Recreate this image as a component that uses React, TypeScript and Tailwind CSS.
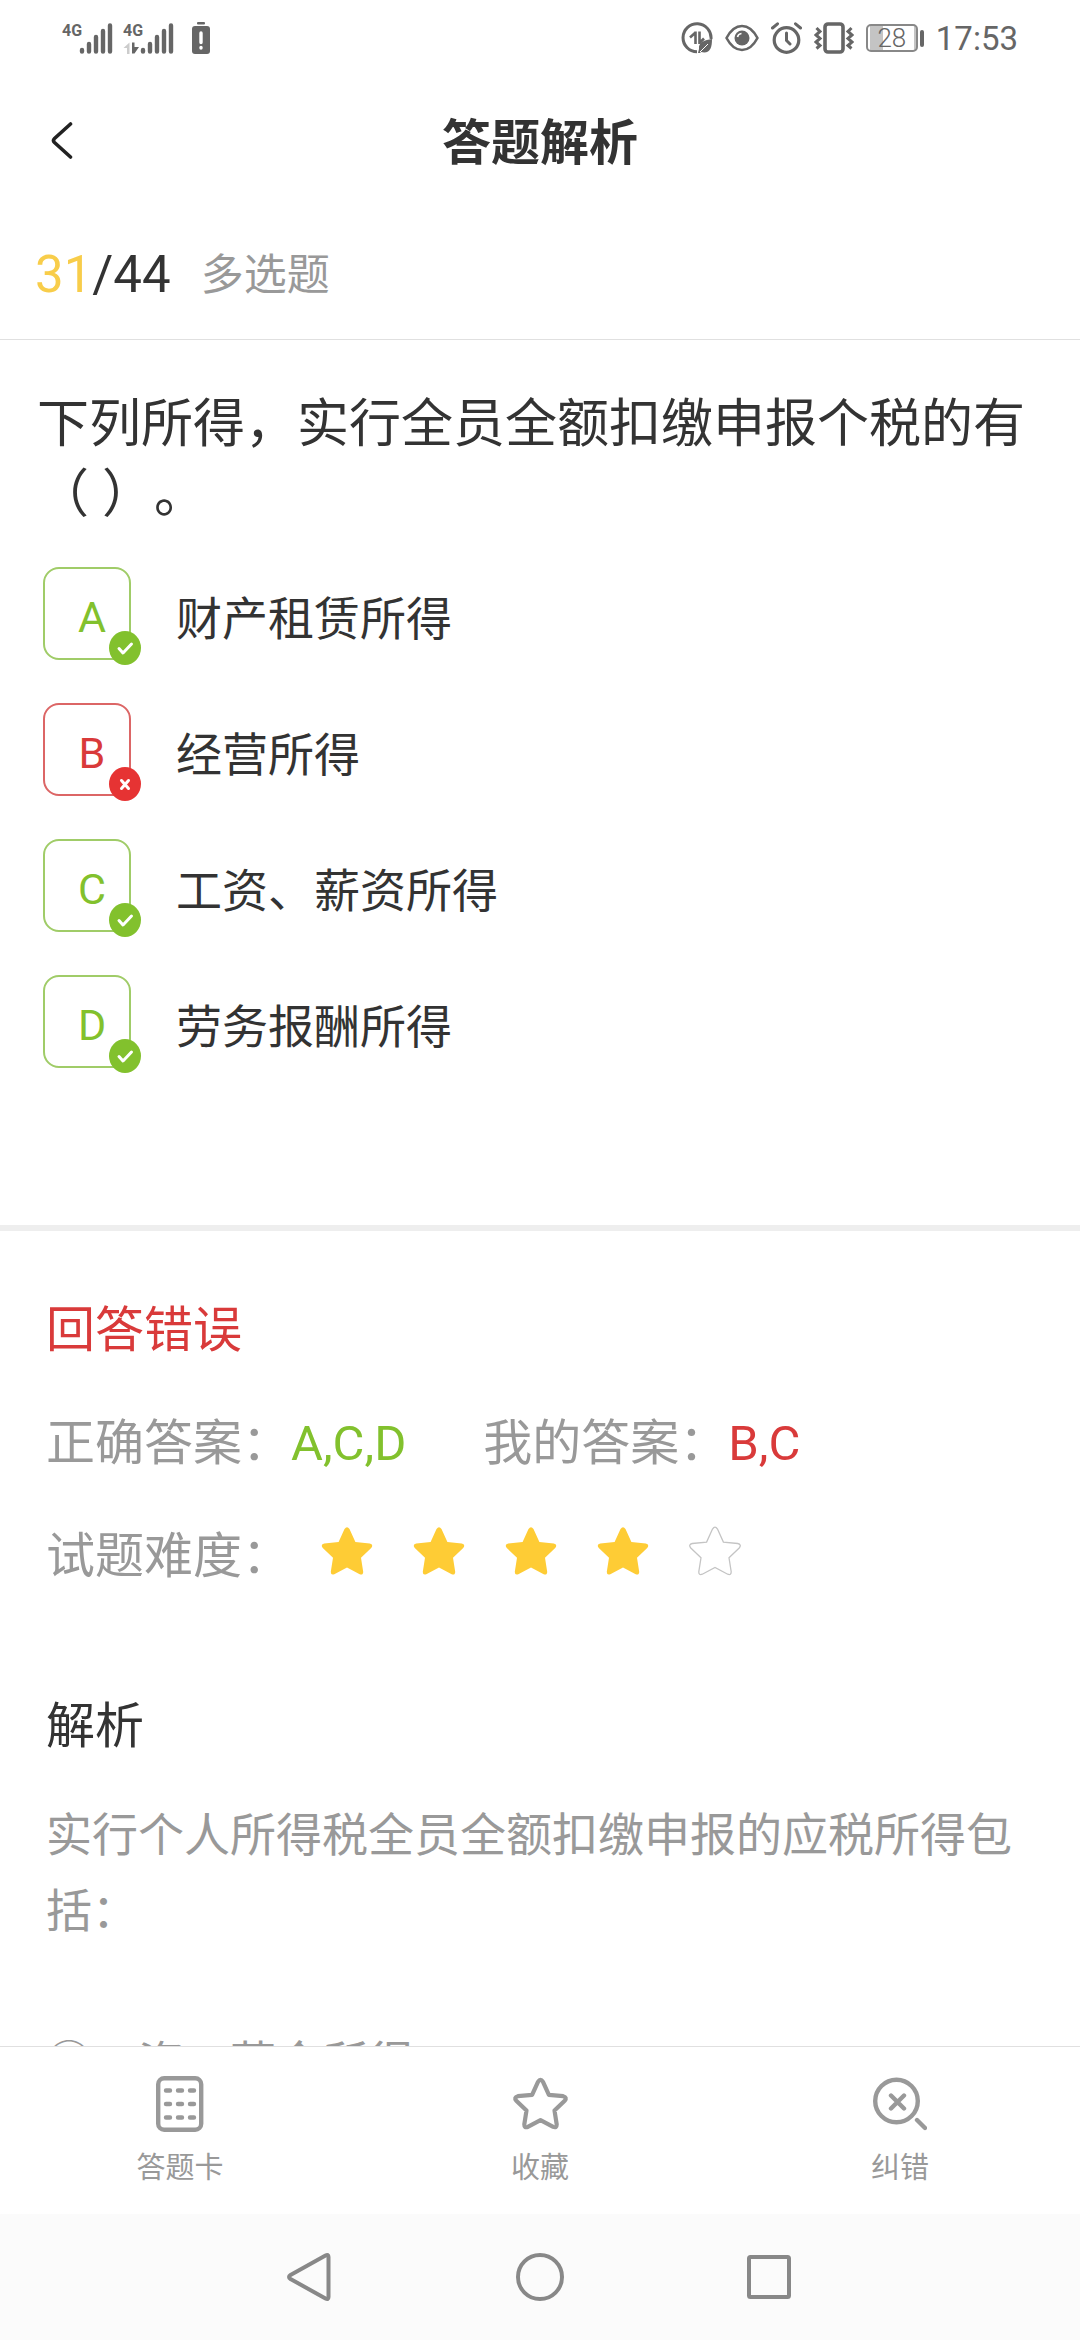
import type { ReactNode } from "react";

type OptionStatus = "correct" | "wrong";

interface Option {
  key: string;
  text: string;
  status: OptionStatus;
}

const options: Option[] = [
  { key: "A", text: "财产租赁所得", status: "correct" },
  { key: "B", text: "经营所得", status: "wrong" },
  { key: "C", text: "工资、薪资所得", status: "correct" },
  { key: "D", text: "劳务报酬所得", status: "correct" },
];

const difficulty = 4;

const STAR_PATH =
  "M22.8 2.6Q25.3 -1.2 27.8 2.6L33.7 15.6L48 17Q52.2 18 49.5 21.5L39.3 31.3L41.5 45.2Q41.5 49 38 47.7L25.3 41L12.6 47.7Q9 49 9.1 45.2L11.3 31.3L1.1 21.5Q-1.6 18 2.6 17L16.9 15.6Z";

// Signal strength with the network type above the short bars
function Signal({ transfer = false }: { transfer?: boolean }) {
  return (
    <svg width="52" height="34" viewBox="0 0 52 34" fill="#666">
      <text x="0" y="15" fontSize="16" fontWeight="700" fontFamily="Roboto, sans-serif">
        4G
      </text>
      {transfer && (
        <>
          <path d="M6.500 21.500V33H4V27H0.500Z" fill="#ccc" />
          <path d="M9 21.500H11.500V26H16L11.500 32.500H9Z" />
        </>
      )}
      <g stroke="#666" strokeWidth="4.400" strokeLinecap="round">
        <path d="M20 29V30.500M27 23V30.500M34 16V30.500M41 10V30.500M48 4.500V30.500" />
      </g>
    </svg>
  );
}

function StatusBar() {
  return (
    <div className="flex h-[76px] shrink-0 items-center justify-between px-[62px]">
      <div className="flex items-center gap-[9px]">
        <Signal />
        <Signal transfer />
        <svg className="ml-2" width="18" height="34" viewBox="0 0 18 34">
          <rect x="5" y="1" width="8" height="2.500" rx="1" fill="#666" />
          <rect y="5" width="18" height="28" rx="3" fill="#666" />
          <path
            d="M9 12V21.500M9 26.500V27"
            stroke="#fff"
            strokeWidth="3.400"
            strokeLinecap="round"
          />
        </svg>
      </div>

      <div className="flex items-center gap-3 text-[#666]">
        {/* Data saver */}
        <svg width="32" height="32" viewBox="0 0 32 32" fill="none">
          <path
            d="M30 17A14 14 0 1 0 16 29.800"
            stroke="#666"
            strokeWidth="3"
          />
          <path
            d="M14.500 9.500V22M14 11L9 15.500M18.500 9.500V22M19 20.500L23 16.500"
            stroke="#666"
            strokeWidth="2.600"
          />
          <path d="M31 17C24 18 17 20 18 27L17 31H19L20 30C29 32 31 26 31 17Z" fill="#666" />
          <path d="M19 30L27 22" stroke="#fff" strokeWidth="1" />
        </svg>
        <svg width="34" height="28" viewBox="0 0 34 28" fill="none">
          <path
            d="M1.500 14C10 -2 24 -2 32.500 14C24 30 10 30 1.500 14Z"
            stroke="#666"
            strokeWidth="2.600"
            strokeLinejoin="round"
          />
          <circle cx="17" cy="14" r="7.500" fill="#666" />
          <path d="M12.500 13A4.500 4.500 0 0 1 16.500 9.500" stroke="#fff" strokeWidth="1.600" />
        </svg>
        <svg width="31" height="32" viewBox="0 0 31 32" fill="none" stroke="#666">
          <circle cx="15.500" cy="18" r="12.300" strokeWidth="3.200" />
          <path
            d="M15.500 11V18.500L19 22M1.500 6L6.500 1.800M29.500 6L24.500 1.800"
            strokeWidth="3"
            strokeLinecap="round"
          />
        </svg>
        <svg width="40" height="32" viewBox="0 0 40 32" fill="none" stroke="#666">
          <rect x="11" y="2" width="18" height="28" rx="3" strokeWidth="3.600" />
          <path
            d="M2.500 6L6 9.500L2 13L6 16.500L2 20L6 23.500L2.500 26.500M37.500 6L34 9.500L38 13L34 16.500L38 20L34 23.500L37.500 26.500"
            strokeWidth="3"
          />
        </svg>
        <div className="flex items-center gap-[2px]">
          <div className="flex h-[28px] w-[52px] items-center justify-center rounded-[5px] border-2 border-[#888] bg-linear-to-r from-[#c4c4c4] from-30% to-white to-30% bg-origin-content p-[2px]">
            <span className="text-[26px] leading-none font-light">28</span>
          </div>
          <span className="h-[17px] w-[4px] rounded-full bg-[#666]" />
        </div>
        <span className="text-[33px] leading-none">17:53</span>
      </div>
    </div>
  );
}

function Header() {
  return (
    <header className="flex h-[132px] shrink-0 items-center px-[50px]">
      <button type="button" aria-label="返回" className="w-12">
        <svg width="24" height="42" viewBox="0 0 24 42" fill="none">
          <path
            d="M20.500 3L4.500 17.500Q2.500 19.500 4.500 21.500L20.500 36"
            stroke="#222"
            strokeWidth="3.600"
            strokeLinecap="round"
          />
        </svg>
      </button>
      <h1 className="flex-1 pt-[3px] text-center text-[49px] leading-[70px] font-bold">
        答题解析
      </h1>
      <span className="w-12" />
    </header>
  );
}

function OptionMark({ option }: { option: Option }) {
  const correct = option.status === "correct";

  return (
    <div
      className={`relative flex size-[98px] shrink-0 items-center justify-center pt-[3px] text-[43px] leading-none ${
        correct ? "text-[#82c12d]" : "text-[#d93a3a]"
      }`}
    >
      <svg className="absolute inset-0" width="98" height="98" viewBox="0 0 98 98" fill="none">
        <rect
          x="1"
          y="1"
          width="86"
          height="91"
          rx="15"
          stroke={correct ? "#a0cc68" : "#dc6666"}
          strokeWidth="2"
        />
        <ellipse cx="82" cy="81" rx="16" ry="17" fill={correct ? "#82c12d" : "#e63333"} />
        <path
          d={
            correct
              ? "M76 81.500L80 86L88.500 77"
              : "M78.500 77.500L85.500 85.500M85.500 77.500L78.500 85.500"
          }
          stroke="#fff"
          strokeWidth="3"
          strokeLinecap="round"
          strokeLinejoin="round"
        />
      </svg>
      {option.key}
    </div>
  );
}

function Stars({ value }: { value: number }) {
  return (
    <div className="flex gap-10 pb-3" role="img" aria-label={`${value} / 5`}>
      {[1, 2, 3, 4, 5].map((n) => (
        <svg key={n} width="52" height="50" viewBox="-0.700 -0.500 52 50">
          <path
            d={STAR_PATH}
            fill={n <= value ? "#fecc35" : "none"}
            stroke={n <= value ? "none" : "#c4c4c4"}
            strokeWidth="1.300"
          />
        </svg>
      ))}
    </div>
  );
}

function TabButton({ label, children }: { label: string; children: ReactNode }) {
  return (
    <button type="button" className="flex flex-1 flex-col items-center gap-4 pt-[29px]">
      {children}
      <span className="text-[29px] leading-10">{label}</span>
    </button>
  );
}

export default function App() {
  return (
    <div className="flex h-screen flex-col bg-white font-[Roboto,'Noto_Sans_CJK_SC',sans-serif] text-[#333] [text-spacing-trim:space-all]">
      <StatusBar />
      <Header />

      <div className="flex h-[132px] shrink-0 items-center gap-[30px] border-b border-[#e0e0e0] px-[35px] pt-[2px]">
        <span className="text-[51px] leading-[70px]">
          <span className="text-[#f8cd4a]">31</span>/44
        </span>
        <span className="text-[43px] leading-[70px] text-[#999]">多选题</span>
      </div>

      <main className="min-h-0 flex-1 overflow-hidden">
        <section className="border-b-6 border-[#eee] px-[37px] pt-[50px] pb-[152px]">
          <p className="text-[52px] leading-[70px]">
            下列所得，实行全员全额扣缴申报个税的有（ ）。
          </p>
          <ul className="mt-[37px] flex flex-col gap-[38px] pl-[6px]">
            {options.map((option) => (
              <li key={option.key} className="flex items-center gap-[35px]">
                <OptionMark option={option} />
                <span className="pt-[5px] text-[46px] leading-[70px]">{option.text}</span>
              </li>
            ))}
          </ul>
        </section>

        <section className="px-[46px] pt-[65px] text-[49px] leading-[70px]">
          <div className="flex flex-col gap-[43px] text-[#999]">
            <h2 className="text-[#d93a3a]">回答错误</h2>
            <div className="flex gap-[77px]">
              <p>
                正确答案：<span className="text-[#82c12d]">A,C,D</span>
              </p>
              <p>
                我的答案：<span className="text-[#d93a3a]">B,C</span>
              </p>
            </div>
            <div className="flex items-center gap-[30px]">
              <span>试题难度：</span>
              <Stars value={difficulty} />
            </div>
          </div>

          <h2 className="mt-[100px]">解析</h2>
          <div className="mt-[35px] text-[46px] leading-[76px] text-[#999]">
            <p>实行个人所得税全员全额扣缴申报的应税所得包括：</p>
            <p className="mt-[76px]">①工资、薪金所得</p>
          </div>
        </section>
      </main>

      <nav className="flex h-[168px] shrink-0 items-start border-t border-[#e0e0e0] bg-white text-[#999]">
        <TabButton label="答题卡">
          <svg width="48" height="56" viewBox="0 0 48 56" fill="none" stroke="#999">
            <rect x="2.200" y="2.200" width="43" height="51.600" rx="6" strokeWidth="4.400" />
            <path
              d="M10 14.500H14M22 14.500H26M34 14.500H38M10 28H14M22 28H26M34 28H38M10 41.500H14M22 41.500H26M34 41.500H38"
              strokeWidth="4.400"
              strokeLinecap="round"
            />
          </svg>
        </TabButton>
        <TabButton label="收藏">
          <svg width="57" height="56" viewBox="-3.200 -3.200 57 56" fill="none">
            <path d={STAR_PATH} stroke="#999" strokeWidth="4.200" strokeLinejoin="round" />
          </svg>
        </TabButton>
        <TabButton label="纠错">
          <svg width="54" height="56" viewBox="0 0 54 56" fill="none" stroke="#999">
            <circle cx="23.500" cy="25" r="21.300" strokeWidth="4.400" />
            <path
              d="M18 19.500L31 32.500M31 19.500L18 32.500M44 44L52 52"
              strokeWidth="4.400"
              strokeLinecap="round"
            />
          </svg>
        </TabButton>
      </nav>

      {/* System navigation */}
      <div className="flex h-[126px] shrink-0 items-center justify-center gap-[181px] bg-[#fbfbfb]">
        <button type="button" aria-label="Back">
          <svg width="48" height="48" viewBox="0 0 48 48" fill="none">
            <path
              d="M38.500 2.500Q41.500 1 41.500 4V44Q41.500 47 38.500 45.500L3.500 26Q0.500 24 3.500 22Z"
              stroke="#888"
              strokeWidth="4"
              strokeLinejoin="round"
            />
          </svg>
        </button>
        <button type="button" aria-label="Home">
          <svg width="48" height="48" viewBox="0 0 48 48" fill="none">
            <circle cx="24" cy="24" r="22" stroke="#888" strokeWidth="4" />
          </svg>
        </button>
        <button type="button" aria-label="Recents">
          <svg width="48" height="48" viewBox="0 0 48 48" fill="none">
            <rect x="4" y="4" width="40" height="40" rx="1.500" stroke="#888" strokeWidth="4" />
          </svg>
        </button>
      </div>
    </div>
  );
}
